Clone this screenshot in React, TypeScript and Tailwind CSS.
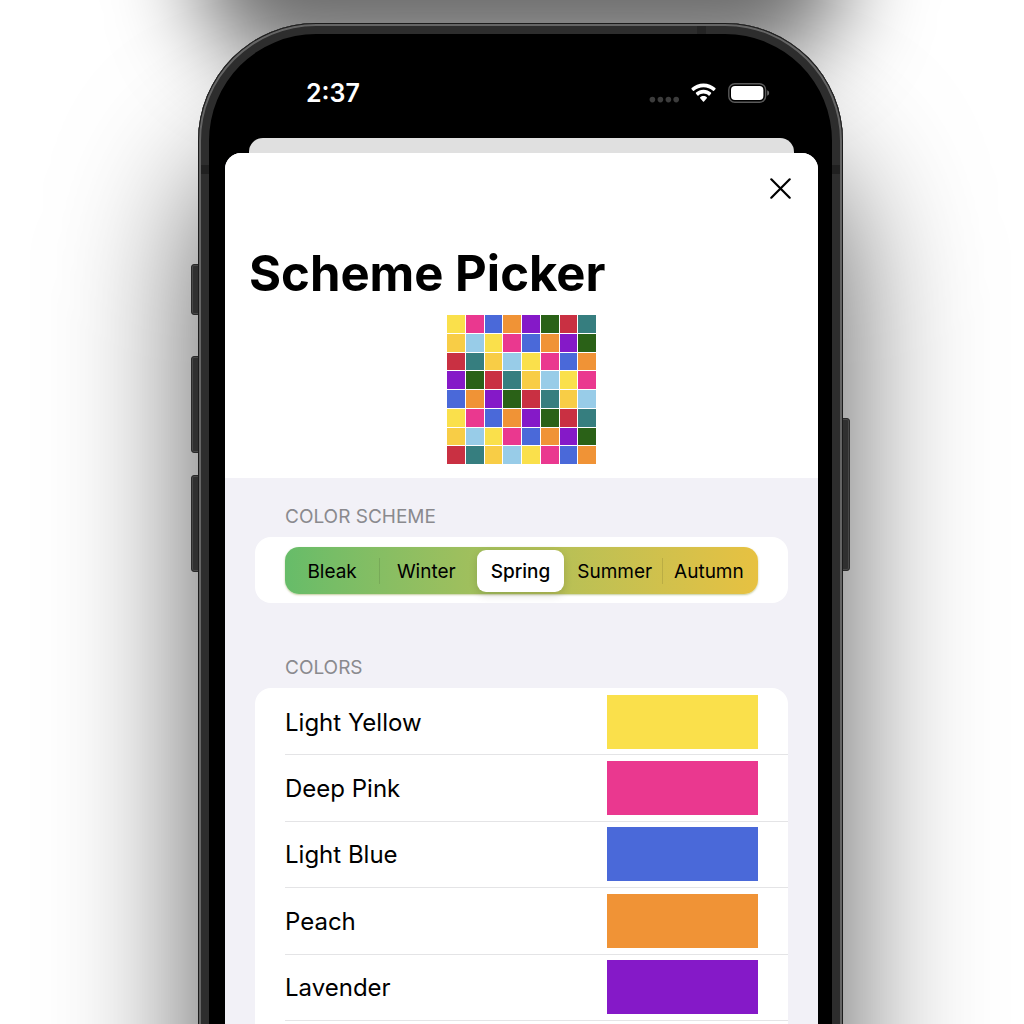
import { useState } from "react";

const C: Record<string, string> = {
  yellow: "bg-[#fae04b]",
  pink: "bg-[#ea388f]",
  blue: "bg-[#4a69d9]",
  peach: "bg-[#f09336]",
  purple: "bg-[#8519c8]",
  green: "bg-[#2a6117]",
  red: "bg-[#c93042]",
  teal: "bg-[#367e7f]",
  gold: "bg-[#f8cd46]",
  sky: "bg-[#98cce8]",
};

const ORDER = ["yellow", "pink", "blue", "peach", "purple", "green", "red", "teal", "gold", "sky"];

const ROWS = [
  { name: "Light Yellow", color: "yellow" },
  { name: "Deep Pink", color: "pink" },
  { name: "Light Blue", color: "blue" },
  { name: "Peach", color: "peach" },
  { name: "Lavender", color: "purple" },
];

const SCHEMES = ["Bleak", "Winter", "Spring", "Summer", "Autumn"];

function StatusBar() {
  return (
    <div className="flex h-[104px] items-center justify-between pt-[13px] pr-12 pl-[81px]">
      <span className="text-[25px] leading-8 font-semibold">2:37</span>
      <div className="flex items-center gap-3">
        <svg width="30" height="20" viewBox="0 0 30 20" fill="#3c3c3c" aria-hidden="true">
          <circle cx="3.4" cy="16.6" r="2.8" />
          <circle cx="11.4" cy="16.6" r="2.8" />
          <circle cx="19.4" cy="16.6" r="2.8" />
          <circle cx="27.2" cy="16.6" r="2.8" />
        </svg>
        <svg width="25" height="20" viewBox="0 0 25 20" fill="#fff" aria-hidden="true">
          <path d="M12.5 0.4C7.9 0.4 3.7 2.2 0.6 5.1Q0.1 5.6 0.6 6.2L2 7.8Q2.5 8.3 3 7.8C5.5 5.5 8.9 4.2 12.5 4.2S19.5 5.5 22 7.8Q22.5 8.3 23 7.8L24.4 6.2Q24.9 5.6 24.4 5.1C21.3 2.2 17.1 0.4 12.5 0.4Z" />
          <path d="M12.5 6.8C9.6 6.8 7 7.9 5 9.6Q4.5 10.1 5 10.7L6.5 12.4Q7 12.9 7.5 12.4C8.9 11.3 10.6 10.6 12.5 10.6S16.1 11.3 17.5 12.4Q18 12.9 18.5 12.4L20 10.7Q20.5 10.1 20 9.6C18 7.9 15.4 6.8 12.5 6.8Z" />
          <path d="M12.5 13.1C11.2 13.1 10 13.5 9.2 14.2Q8.7 14.6 9.2 15.2L12 18.5Q12.5 19 13 18.5L15.8 15.2Q16.3 14.6 15.8 14.2C15 13.5 13.8 13.1 12.5 13.1Z" />
        </svg>
        <svg width="42" height="20" viewBox="0 0 42 20" aria-hidden="true">
          <rect x="0.8" y="0.8" width="36.8" height="18.4" rx="6" fill="none" stroke="#5a5a5a" strokeWidth="1.4" />
          <rect x="3" y="3" width="32.4" height="14" rx="4" fill="#fff" />
          <path d="M39.2 7.2Q41.2 8 41.2 10T39.2 12.8Z" fill="#6a6a6a" />
        </svg>
      </div>
    </div>
  );
}

function Mosaic() {
  return (
    <div className="mx-auto grid h-[149px] w-[149px] grid-cols-8 grid-rows-8 gap-px">
      {Array.from({ length: 64 }, (_, i) => (
        <div key={i} className={C[ORDER[i % 10]]} />
      ))}
    </div>
  );
}

function SchemeControl() {
  const [selected, setSelected] = useState("Spring");
  return (
    <div
      role="radiogroup"
      aria-labelledby="scheme-heading"
      className="flex rounded-[14px] bg-linear-to-r from-[#66bc69] to-[#e7c141] pt-[3px] pr-0.5 pb-0.5 shadow-[0_1px_2px_#8a9a3a80]"
    >
      {SCHEMES.map((name, i) => {
        const active = name === selected;
        const divided = i > 0 && !active && SCHEMES[i - 1] !== selected;
        return (
          <label key={name} className="relative flex h-[42px] flex-1 cursor-pointer">
            {divided && <span className="absolute top-2 left-0 h-[26px] w-px bg-black/10" />}
            <input
              type="radio"
              name="scheme"
              value={name}
              checked={active}
              onChange={() => setSelected(name)}
              className="absolute inset-0 cursor-pointer appearance-none"
            />
            <span
              className={
                active
                  ? "relative mx-1 flex flex-1 items-center justify-center rounded-[9px] bg-white pt-0.5 text-[19px] leading-6 font-medium shadow-[0_3px_8px_#00000024]"
                  : "flex flex-1 items-center justify-center pt-0.5 text-[19px] leading-6"
              }
            >
              {name}
            </span>
          </label>
        );
      })}
    </div>
  );
}

function SideButton({ place }: { place: string }) {
  return (
    <div className={`absolute w-[9px] border border-[#2a2a2a] bg-[#303030] shadow-[inset_0_0_0_1px_#484848] ${place}`} />
  );
}

export default function App() {
  return (
    <main className="relative flex h-screen justify-center overflow-hidden bg-white pt-[23px] pl-[17px] font-[Inter,'Liberation_Sans',sans-serif] text-black">
      <div className="relative flex w-full max-w-[645px] flex-col">
        <div className="absolute inset-x-0 -top-40 h-[200px] rounded-[90px] bg-black/58 blur-[45px]" />
        <div className="absolute inset-x-0 top-[130px] -bottom-60 rounded-[110px] shadow-[0_0_140px_#000000a8]" />
        <SideButton place="-left-[7px] top-[241px] h-[51px] rounded-l-[3px]" />
        <SideButton place="-left-[7px] top-[333px] h-[97px] rounded-l-[3px]" />
        <SideButton place="-left-[7px] top-[452px] h-[97px] rounded-l-[3px]" />
        <SideButton place="-right-[7px] top-[395px] h-[153px] rounded-r-[3px]" />

        <div className="relative -mb-4 flex flex-1 flex-col rounded-t-[118px] bg-black px-[11px] pt-[11px] shadow-[inset_0_0_0_1px_#1c1c1c,inset_0_0_0_3px_#656565,inset_0_0_0_11px_#2d2d2d]">
          <div className="absolute top-[3px] right-[137px] h-2 w-[9px] bg-[#242424]" />
          <div className="absolute top-[142px] left-[3px] h-[9px] w-2 bg-[#202020]" />
          <div className="absolute top-[142px] right-[3px] h-[9px] w-2 bg-[#202020]" />

          <div className="flex flex-1 flex-col pr-[14px] pl-4">
            <div className="text-white">
              <StatusBar />
            </div>
            <div className="mx-6 h-[15px] rounded-t-[14px] bg-[#e0e0e0]" />

            <section className="flex flex-1 flex-col overflow-hidden rounded-t-[16px] bg-[#f2f1f7]">
              <header className="bg-white pb-[14px]">
                <div className="flex justify-end pt-[25px] pr-[27px]">
                  <button type="button" aria-label="Close" className="cursor-pointer">
                    <svg width="21" height="21" viewBox="0 0 21 21" stroke="#000" strokeWidth="2.2" strokeLinecap="round" aria-hidden="true">
                      <path d="M1.3 1.3L19.7 19.7M19.7 1.3L1.3 19.7" />
                    </svg>
                  </button>
                </div>
                <h1 className="mt-[45px] mb-[11px] pl-6 text-[49px] leading-[60px] font-bold">Scheme Picker</h1>
                <Mosaic />
              </header>

              <div className="flex flex-1 flex-col px-[30px]">
                <h2 id="scheme-heading" className="mt-[27px] mb-2 pl-[30px] text-[19px] leading-6 text-[#8a8a8e]">
                  COLOR SCHEME
                </h2>
                <div className="rounded-[16px] bg-white px-[30px] pt-2.5 pb-[9px]">
                  <SchemeControl />
                </div>

                <h2 className="mt-[53px] mb-2 pl-[30px] text-[19px] leading-6 text-[#8a8a8e]">COLORS</h2>
                <div className="flex-1 rounded-t-[16px] bg-white pt-px">
                  <ul className="grid min-h-[332px] auto-rows-fr pl-[30px]">
                    {ROWS.map((row) => (
                      <li key={row.name} className="flex items-center justify-between border-b border-[#e4e4e6] pr-[30px]">
                        <span className="pt-0.5 text-[24px] leading-8">{row.name}</span>
                        <span className={`h-[54px] w-[151px] ${C[row.color]}`} />
                      </li>
                    ))}
                  </ul>
                </div>
              </div>
            </section>
          </div>
        </div>
      </div>
    </main>
  );
}
